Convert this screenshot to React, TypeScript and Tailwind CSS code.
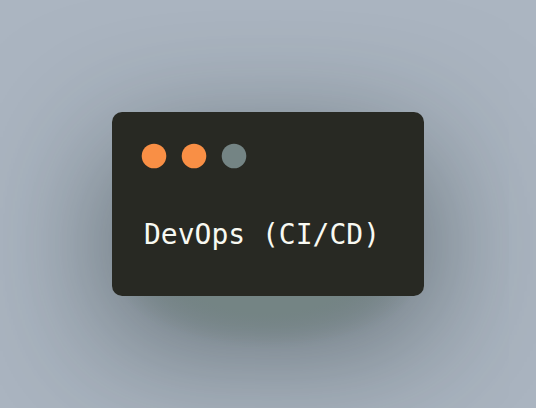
function WindowControls() {
  return (
    <svg width="108" height="26" viewBox="0 0 108 26" aria-hidden="true">
      <circle cx="13" cy="13" r="12.3" fill="#f98f45" />
      <circle cx="53" cy="13" r="12.3" fill="#f98f45" />
      <circle cx="93" cy="13" r="12.3" fill="#748484" />
    </svg>
  );
}

export default function App() {
  return (
    <main className="min-h-screen overflow-hidden bg-[#abb5c1] p-28">
      <div className="relative rounded-[10px] shadow-[0_40px_136px_rgba(20,34,32,0.55)]">
        {/* Soft green glow under the window */}
        <div
          aria-hidden="true"
          className="absolute inset-x-0 -bottom-13 h-40 bg-[radial-gradient(closest-side,#748484_56%,transparent)]"
        />
        <section className="relative rounded-[10px] bg-[#282923] pb-[43px]">
          <header className="px-[29px] pt-[31px]">
            <WindowControls />
          </header>
          <pre className="mt-[47px] px-8 font-['DejaVu_Sans_Mono','Liberation_Mono',monospace] text-[28px] leading-[37px] text-[#f8f9f2]">
            <code className="font-['DejaVu_Sans_Mono','Liberation_Mono',monospace]">DevOps (CI/CD)</code>
          </pre>
        </section>
      </div>
    </main>
  );
}
